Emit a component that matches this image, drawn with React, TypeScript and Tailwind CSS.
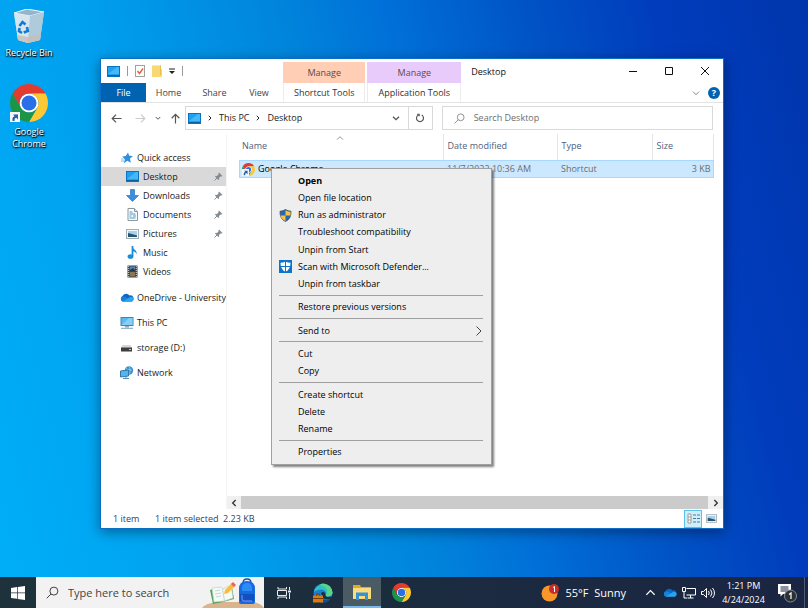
import type { ReactNode } from 'react';

type IconProps = { className?: string };

function ChromeIcon({ className }: IconProps) {
  return (
    <svg viewBox="0 0 48 48" className={className} aria-hidden="true">
      <circle cx="24" cy="24" r="12" fill="#fff" />
      <path fill="#e33b2e" d="M24,12H44.78a24,24,0,0,0-41.56,0L13.61,30A12,12,0,0,1,24,12Z" />
      <path fill="#fcc934" d="M34.39,30,24,48A24,24,0,0,0,44.78,12H24A12,12,0,0,1,34.39,30Z" />
      <path fill="#1e9447" d="M13.61,30,3.22,12A24,24,0,0,0,24,48L34.39,30a12,12,0,0,1-20.78,0Z" />
      <circle cx="24" cy="24" r="9.5" fill="#2b6fe8" />
    </svg>
  );
}

function ShortcutArrow({ className }: IconProps) {
  return (
    <svg viewBox="0 0 10 10" className={className} aria-hidden="true">
      <rect width="10" height="10" fill="#f4f6f8" />
      <path d="M2.5 9V6.5q0-2 2.2-2.2L3 2.5h5v5L6.3 5.8Q4.5 5.8 4.5 9z" fill="#2a5fa8" />
    </svg>
  );
}

function RecycleBinIcon({ className }: IconProps) {
  return (
    <svg viewBox="0 0 30 34" className={className} aria-hidden="true">
      <path d="M0 4 13 0l17 3-4 28-12 3-10-3z" fill="#c3dcea" />
      <path d="M0 4 16 7l14-4L13 0z" fill="#93b6cc" stroke="#edf6fb" strokeWidth="1" />
      <path d="M0 4l16 3-2 27-10-3z" fill="#d6e6ef" />
      <path d="M16 7l14-4-4 28-12 3z" fill="#aecadb" />
      <path d="M4 26l10 2 13-3-1 6-12 3-10-3z" fill="#c9bdb4" opacity=".8" />
      <g fill="none" stroke="#1878d0" strokeWidth="2.6">
        <path d="M5.5 17 8.500 13l3 2.500" />
        <path d="M13 18l.8 4-4 1.500" />
        <path d="M8 24l-3-1.800.6-3.200" />
      </g>
    </svg>
  );
}

function DesktopIcon({ className }: IconProps) {
  return (
    <svg viewBox="0 0 13 11" className={className} aria-hidden="true">
      <rect x=".5" y=".5" width="12" height="10" fill="#1ea1f1" stroke="#0b73bd" />
      <path d="M1 8 10 1h2v7z" fill="#45b8fa" />
      <path d="M1 9.5h11" stroke="#0f5f9e" />
    </svg>
  );
}

function StarIcon() {
  return (
    <svg viewBox="0 0 12 12" className="size-3" aria-hidden="true">
      <path d="M7 .5l1.200 3.300 3.800.2-3 2.600.8 4.200-3.500-2L3 11.200l.8-4L1.200 4.600l3.600-.5z" fill="#2f8fdc" />
      <path d="M0 7h2.500M0 9h3" stroke="#7fbbe9" />
    </svg>
  );
}

function DownloadIcon() {
  return (
    <svg viewBox="0 0 13 13" className="size-[13px]" aria-hidden="true">
      <path d="M4.500.5h4v6h4l-6 6-6-6h4z" fill="#3a8ede" stroke="#2877c5" strokeWidth=".7" />
    </svg>
  );
}

function DocumentIcon() {
  return (
    <svg viewBox="0 0 13 13" className="size-[13px]" aria-hidden="true">
      <path d="M2 .5h6.500l3 3v9H2z" fill="#fafcfd" stroke="#8b979f" />
      <path d="M8.500.5v3h3" fill="#d9e0e4" stroke="#8b979f" />
      <path d="M3.500 4h3M3.500 6h6M3.500 8h2M7 8h3M3.500 10h6" stroke="#4498c9" />
    </svg>
  );
}

function PictureIcon({ className = 'h-[10px] w-[13px]' }: IconProps) {
  return (
    <svg viewBox="0 0 13 10" className={className} aria-hidden="true">
      <rect x=".5" y=".5" width="12" height="9" fill="#f6f8f9" stroke="#a3adb4" />
      <rect x="2" y="2" width="9" height="6" fill="#a7d2ee" />
      <path d="M2 4l4 1 5 1.500V8H2z" fill="#27566d" />
    </svg>
  );
}

function MusicIcon() {
  return (
    <svg viewBox="0 0 13 13" className="size-[13px]" aria-hidden="true">
      <path d="M6.500 0v10" stroke="#168fdd" strokeWidth="1.800" />
      <path d="M6 0c.5 3.500 5.500 3.500 4.500 8.500C10 6 8.500 5.500 6 5z" fill="#168fdd" />
      <ellipse cx="4.500" cy="10.500" rx="2.900" ry="2.300" fill="#168fdd" />
    </svg>
  );
}

function VideoIcon() {
  return (
    <svg viewBox="0 0 13 13" className="size-[13px]" aria-hidden="true">
      <rect x="1.500" y=".5" width="10" height="12" fill="#3e4347" />
      <path d="M2.700 1v11M10.300 1v11" stroke="#d7dadc" strokeDasharray="1 1" />
      <rect x="4" y="1.500" width="5" height="4.500" fill="#5186bd" />
      <rect x="4" y="7" width="5" height="4.500" fill="#8b7650" />
      <path d="M4 5l3-2 2 2v1H4z" fill="#26374a" />
    </svg>
  );
}

function CloudIcon({ className }: IconProps) {
  return (
    <svg viewBox="0 0 14 9" className={className} aria-hidden="true">
      <path d="M3 8.500a3 3 0 0 1-.5-5.500A4 4 0 0 1 9.500 2.500a3 3 0 0 1 1.800 6z" fill="#0b68c2" />
      <path d="M2.500 8.500A2.500 2.500 0 0 1 2 4c2-.8 3.500-.2 4.500.6L11 7.500z" fill="#1583dc" />
      <path d="M2.500 8.800 9 4.800a2.500 2.500 0 0 1 4.500 2A2 2 0 0 1 11.800 8.800z" fill="#28a5ee" />
    </svg>
  );
}

function PcIcon() {
  return (
    <svg viewBox="0 0 14 12" className="h-3 w-[14px]" aria-hidden="true">
      <rect x="1" y=".5" width="12" height="8" fill="#5ab9f2" stroke="#4783ad" />
      <path d="M1.500 8 9 1h3.500v7z" fill="#86cff8" />
      <path d="M5 9h4v1.500H5z" fill="#8eaabb" />
      <path d="M1 11.300h12" stroke="#7ba3bd" />
    </svg>
  );
}

function DriveIcon() {
  return (
    <svg viewBox="0 0 13 8" className="h-2 w-[13px]" aria-hidden="true">
      <path d="M2.500 1h8L12 4H1z" fill="#d6d6d6" />
      <rect x="1" y="3.500" width="11" height="4" fill="#3b3f42" />
      <rect x="9" y="5" width="2" height="1" fill="#a8d6ae" />
    </svg>
  );
}

function NetworkIcon() {
  return (
    <svg viewBox="0 0 14 13" className="h-[13px] w-[14px]" aria-hidden="true">
      <circle cx="9" cy="4.500" r="4.200" fill="#3a8fcf" />
      <path d="M6 2.500c2 2 4 0 6 2M9 .5c2 3 1 6 0 8" stroke="#8fc9ef" fill="none" />
      <path d="M.5 5 8.500 4v6l-8 1z" fill="#56b5ec" stroke="#3277a8" />
      <path d="M3 12.500h6M6 10.500v2" stroke="#5a8fb4" />
    </svg>
  );
}

function PinIcon() {
  return (
    <svg viewBox="0 0 9 9" className="size-[9px]" aria-hidden="true">
      <path d="M5 .5 8.500 4 7.300 4.600 6.500 4.500 5 6l.2 1.400-.8.600L1 4.600l.7-.8L3 4l1.500-1.500L4.400 1.500z" fill="#838b92" />
      <path d="M3 6 .5 8.500" stroke="#838b92" />
    </svg>
  );
}

function ShieldIcon() {
  return (
    <svg viewBox="0 0 13 13" className="size-[13px]" aria-hidden="true">
      <path d="M6.500.5Q9 2.200 12 2.200 12.300 10 6.500 12.500.7 10 1 2.200 4 2.200 6.500.5z" fill="#2668b0" stroke="#44505c" strokeWidth=".8" />
      <path d="M6.500 1.200Q9 2.800 11.500 2.800V6.500H6.500z" fill="#f6c343" />
      <path d="M6.500 6.500V12Q2.300 10 1.500 6.500z" fill="#f6c343" />
    </svg>
  );
}

function DefenderIcon() {
  return (
    <svg viewBox="0 0 13 13" className="size-[13px]" aria-hidden="true">
      <rect width="13" height="13" fill="#0b74d1" />
      <path d="M6.500 1.500Q9 2.700 11.500 2.700 11.500 9.500 6.500 11.800 1.500 9.500 1.500 2.700 4 2.700 6.500 1.500z" fill="#fff" />
      <path d="M6.500 1v11M1 6.500h11" stroke="#0b74d1" />
    </svg>
  );
}

function SearchIcon({ className }: IconProps) {
  return (
    <svg viewBox="0 0 14 14" className={className} fill="none" stroke="currentColor" aria-hidden="true">
      <circle cx="8.500" cy="5.500" r="4.300" />
      <path d="M5.400 8.600.8 13.200" />
    </svg>
  );
}

function Stroke({ d, className, width = 1 }: { d: string; className: string; width?: number }) {
  return (
    <svg viewBox="0 0 12 12" className={className} fill="none" stroke="currentColor" strokeWidth={width} aria-hidden="true">
      <path d={d} />
    </svg>
  );
}

const ARROW_LEFT = 'M11.500 6H1.500M5.500 1.800 1.300 6l4.200 4.200';
const ARROW_RIGHT = 'M.5 6h10M6.500 1.800 10.700 6l-4.200 4.200';
const ARROW_UP = 'M6 11.500V1.500M1.800 5.700 6 1.500l4.200 4.200';
const CHEVRON_DOWN = 'M1.500 4 6 8.500 10.500 4';
const CHEVRON_UP = 'M1.500 8.500 6 4l4.500 4.500';
const CHEVRON_LEFT = 'M8.500 1.500 4 6l4.500 4.500';
const CHEVRON_RIGHT = 'M3.500 1.500 8 6l-4.500 4.500';

const quickAccess: { label: string; icon: ReactNode; pinned?: boolean; active?: boolean }[] = [
  { label: 'Desktop', icon: <DesktopIcon className="h-[11px] w-[13px]" />, pinned: true, active: true },
  { label: 'Downloads', icon: <DownloadIcon />, pinned: true },
  { label: 'Documents', icon: <DocumentIcon />, pinned: true },
  { label: 'Pictures', icon: <PictureIcon />, pinned: true },
  { label: 'Music', icon: <MusicIcon /> },
  { label: 'Videos', icon: <VideoIcon /> },
];

const places = [
  { label: 'OneDrive - University', icon: <CloudIcon className="h-[9px] w-[14px]" /> },
  { label: 'This PC', icon: <PcIcon /> },
  { label: 'storage (D:)', icon: <DriveIcon /> },
  { label: 'Network', icon: <NetworkIcon /> },
];

const menuGroups: { label: string; icon?: ReactNode; bold?: boolean; submenu?: boolean }[][] = [
  [
    { label: 'Open', bold: true },
    { label: 'Open file location' },
    { label: 'Run as administrator', icon: <ShieldIcon /> },
    { label: 'Troubleshoot compatibility' },
    { label: 'Unpin from Start' },
    { label: 'Scan with Microsoft Defender...', icon: <DefenderIcon /> },
    { label: 'Unpin from taskbar' },
  ],
  [{ label: 'Restore previous versions' }],
  [{ label: 'Send to', submenu: true }],
  [{ label: 'Cut' }, { label: 'Copy' }],
  [{ label: 'Create shortcut' }, { label: 'Delete' }, { label: 'Rename' }],
  [{ label: 'Properties' }],
];

function ContextMenu() {
  return (
    <div
      role="menu"
      className="absolute left-11 top-[34px] flex h-[297px] w-[221px] flex-col border border-[#a0a0a0] bg-[#eeeeee] py-[3px] shadow-[2px_2px_2px_rgba(0,0,0,0.5)]"
    >
      {menuGroups.map((group, i) => (
        <div key={group[0].label} className="contents">
          {i > 0 && <hr className="mt-[2px] mb-[3px] mr-2 ml-[7px] h-px border-0 bg-[#a0a0a0]" />}
          {group.map(item => (
            <button key={item.label} role="menuitem" className="flex min-h-0 flex-1 items-center pr-[6px] pl-[7px] text-left text-black">
              <span className="flex w-[19px] items-center">{item.icon}</span>
              <span className={item.bold ? 'flex-1 font-bold' : 'flex-1'}>{item.label}</span>
              {item.submenu && <Stroke d={CHEVRON_RIGHT} className="size-3 text-[#444]" />}
            </button>
          ))}
        </div>
      ))}
    </div>
  );
}

function ToolTab({ title, label, className }: { title: string; label: string; className: string }) {
  return (
    <div className="mt-[3px] flex flex-col text-center">
      <div className={`flex h-[21px] items-center justify-center text-[#5c4a4a] ${className}`}>{title}</div>
      <button className="flex h-[19px] items-center border-x border-[#ececec] px-[10px] whitespace-nowrap text-[#333]">{label}</button>
    </div>
  );
}

function TitleBar() {
  return (
    <header className="flex h-11 border-b border-[#e3e3e3]">
      <div className="flex w-[182px] flex-col">
        <div className="flex h-6 items-center gap-[7px] pl-[6px]">
          <DesktopIcon className="h-[11px] w-[13px]" />
          <span className="h-[10px] w-px bg-[#999]" />
          <svg viewBox="0 0 10 12" className="h-3 w-[10px]" aria-hidden="true">
            <rect x=".5" y=".5" width="9" height="11" fill="#fff" stroke="#a0a0a0" />
            <path d="M2.500 6l2 2.500 3.500-5" stroke="#e0643c" strokeWidth="1.400" fill="none" />
          </svg>
          <svg viewBox="0 0 10 12" className="h-3 w-[10px]" aria-hidden="true">
            <path d="M0 .5h8.500V4H10v8H0z" fill="#f8d775" />
            <path d="M8.500.5V10" stroke="#e8bf4b" />
          </svg>
          <svg viewBox="0 0 6 7" className="h-[7px] w-[6px]" aria-hidden="true">
            <path d="M0 1h6" stroke="#222" />
            <path d="M0 3h6L3 6z" fill="#222" />
          </svg>
          <span className="h-[10px] w-px bg-[#999]" />
        </div>
        <nav className="flex h-[19px] text-[#444]">
          <button className="w-[45px] bg-[#0063b1] text-white">File</button>
          <button className="w-[45px]">Home</button>
          <button className="w-[47px]">Share</button>
          <button className="w-[42px]">View</button>
        </nav>
      </div>
      <div className="flex gap-[2px]">
        <ToolTab title="Manage" label="Shortcut Tools" className="bg-[#ffceb5]" />
        <ToolTab title="Manage" label="Application Tools" className="bg-[#e9cbfb]" />
      </div>
      <h1 className="flex h-[25px] flex-1 items-center pl-[10px] text-[#111]">Desktop</h1>
      <div className="flex flex-col items-end">
        <div className="flex h-6 items-center text-[#111]">
          <button aria-label="Minimize" className="flex w-9 justify-center"><Stroke d="M2 6.500h8" className="size-3" /></button>
          <button aria-label="Maximize" className="flex w-9 justify-center"><Stroke d="M2.500 2.500h7v7h-7z" className="size-3" /></button>
          <button aria-label="Close" className="flex w-9 justify-center"><Stroke d="M2 2l8 8M10 2l-8 8" className="size-3" /></button>
        </div>
        <div className="flex h-[19px] items-center gap-2 pr-[3px]">
          <button aria-label="Expand ribbon"><Stroke d={CHEVRON_DOWN} className="size-2 text-[#888]" width={1.5} /></button>
          <button aria-label="Help" className="flex size-3 items-center justify-center rounded-full bg-[#0063b1] font-bold text-white">?</button>
        </div>
      </div>
    </header>
  );
}

function AddressBar() {
  return (
    <div className="flex h-[31px] items-center pr-[10px] pb-px pl-[10px] text-[#222]">
      <div className="flex w-[74px] items-center text-[#555]">
        <button aria-label="Back" className="w-6"><Stroke d={ARROW_LEFT} className="size-[11px]" width={1.3} /></button>
        <button aria-label="Forward" className="w-5 text-[#ccc]"><Stroke d={ARROW_RIGHT} className="size-[11px]" width={1.3} /></button>
        <button aria-label="Recent locations" className="w-[15px]"><Stroke d={CHEVRON_DOWN} className="size-[6px]" width={2} /></button>
        <button aria-label="Up"><Stroke d={ARROW_UP} className="size-[11px]" width={1.3} /></button>
      </div>
      <div className="flex h-6 flex-[253] border border-[#d9d9d9]">
        <div className="flex flex-1 items-center gap-[6px] pl-[2px]">
          <DesktopIcon className="h-[11px] w-[13px]" />
          <Stroke d={CHEVRON_RIGHT} className="size-[6px]" width={2} />
          <button>This PC</button>
          <Stroke d={CHEVRON_RIGHT} className="size-[6px]" width={2} />
          <button>Desktop</button>
        </div>
        <button aria-label="Previous locations" className="flex w-6 items-center justify-center text-[#555]">
          <Stroke d={CHEVRON_DOWN} className="size-2" width={2} />
        </button>
        <button aria-label="Refresh" className="flex w-6 items-center justify-center border-l border-[#d9d9d9] text-[#555]">
          <Stroke d="M4 2.500a4.200 4.200 0 1 0 4 0M2.500 1.500h2.500v2.500" className="size-[10px]" width={1.4} />
        </button>
      </div>
      <label className="ml-[9px] flex h-6 min-w-0 flex-[266] items-center gap-[9px] border border-[#d9d9d9] pl-[11px] text-[#777]">
        <SearchIcon className="size-[11px]" />
        <input
          aria-label="Search Desktop"
          placeholder="Search Desktop"
          className="min-w-0 flex-1 bg-transparent outline-none placeholder:text-[#6d6d6d]"
        />
      </label>
    </div>
  );
}

function Sidebar() {
  return (
    <aside className="w-[125px] shrink-0 overflow-hidden pt-[14px] whitespace-nowrap text-[#1a1a1a]">
      <button className="flex h-[19px] w-full items-center gap-1 pl-5">
        <StarIcon />
        Quick access
      </button>
      {quickAccess.map(item => (
        <button
          key={item.label}
          className={`flex h-[19px] w-full items-center pr-[3px] pl-[25px] ${item.active ? 'bg-[#d9d9d9]' : ''}`}
        >
          <span className="flex w-[17px]">{item.icon}</span>
          <span className="flex-1 text-left">{item.label}</span>
          {item.pinned && <PinIcon />}
        </button>
      ))}
      <div className="mt-1">
        {places.map(item => (
          <button key={item.label} className="flex h-[25px] w-full items-center pl-[19px]">
            <span className="flex w-[17px] shrink-0">{item.icon}</span>
            {item.label}
          </button>
        ))}
      </div>
    </aside>
  );
}

function FileList() {
  return (
    <div className="relative flex min-w-0 flex-1 flex-col border-l border-[#f5f5f5]">
      <div className="flex-1 pr-[9px] pl-3">
        <table className="w-full table-fixed border-collapse text-left text-[#6d6d6d]">
          <colgroup>
            <col className="w-[204px]" />
            <col className="w-[114px]" />
            <col className="w-[95px]" />
            <col />
          </colgroup>
          <thead>
            <tr className="h-[26px] text-[#50607a]">
              <th scope="col" className="relative border-r border-[#e5e5e5] pb-[3px] pl-[3px] font-normal">
                Name
                <Stroke d={CHEVRON_UP} className="absolute top-0 left-[97px] size-2" />
              </th>
              <th scope="col" className="border-r border-[#e5e5e5] pb-[3px] pl-1 font-normal">Date modified</th>
              <th scope="col" className="border-r border-[#e5e5e5] pb-[3px] pl-1 font-normal">Type</th>
              <th scope="col" className="border-r border-[#e5e5e5] pb-[3px] pl-1 font-normal">Size</th>
            </tr>
          </thead>
          <tbody>
            <tr className="h-[18px] bg-[#cce8ff] outline outline-[#a8d8ff] -outline-offset-1">
              <td className="pl-[3px] text-black">
                <span className="flex items-center gap-[3px]">
                  <span className="relative">
                    <ChromeIcon className="size-[13px]" />
                    <ShortcutArrow className="absolute bottom-0 left-0 size-[7px]" />
                  </span>
                  Google Chrome
                </span>
              </td>
              <td className="pl-1">11/7/2022 10:36 AM</td>
              <td className="pl-1">Shortcut</td>
              <td className="pr-[3px] text-right">3 KB</td>
            </tr>
          </tbody>
        </table>
      </div>
      <div className="flex h-[13px] bg-[#f0f0f0] text-[#333]">
        <button aria-label="Scroll left" className="flex w-[14px] items-center justify-center"><Stroke d={CHEVRON_LEFT} className="size-2" width={2} /></button>
        <div className="flex-1 bg-[#cbcbcb]" />
        <button aria-label="Scroll right" className="flex w-[15px] items-center justify-center"><Stroke d={CHEVRON_RIGHT} className="size-2" width={2} /></button>
      </div>
      <ContextMenu />
    </div>
  );
}

function ExplorerWindow() {
  return (
    <main className="absolute inset-x-0 top-[58px] bottom-12 mr-[84px] ml-[100px] flex flex-col border border-[#0b6fc8] bg-white shadow-[0_3px_12px_rgba(0,0,0,0.4)]">
      <TitleBar />
      <AddressBar />
      <div className="flex min-h-0 flex-1">
        <Sidebar />
        <FileList />
      </div>
      <footer className="flex h-[19px] items-center pl-3 text-[#2b3f66]">
        <span className="w-[42px]">1 item</span>
        <span className="flex-1">1 item selected&nbsp; 2.23 KB</span>
        <button aria-label="Details view" className="flex h-[18px] w-[18px] items-center justify-center border border-[#5cc0ea] bg-[#cdeefb]">
          <svg viewBox="0 0 13 11" className="h-[11px] w-[13px]" aria-hidden="true">
            <path d="M1 1h3v9H1zM1 4h3M1 7h3" fill="#fff" stroke="#888" strokeWidth=".8" />
            <path d="M6 2h3M10 2h3M6 5.500h3M10 5.500h3M6 9h3M10 9h3" stroke="#56798f" />
          </svg>
        </button>
        <button aria-label="Large icons view" className="mr-[2px] flex w-[19px] justify-center"><PictureIcon className="h-[9px] w-[11px]" /></button>
      </footer>
    </main>
  );
}

function DesktopShortcut({ label, children }: { label: string; children: ReactNode }) {
  return (
    <button className="flex w-[58px] flex-col items-center gap-1 leading-3 text-white [text-shadow:0_1px_2px_#000,1px_1px_1px_#000]">
      {children}
      {label}
    </button>
  );
}

function Taskbar() {
  return (
    <footer className="flex h-[31px] items-stretch bg-linear-to-r from-[#1e323b] to-[#1a2543] text-[11px] text-white">
      <button aria-label="Start" className="flex w-9 items-center justify-center">
        <svg viewBox="0 0 14 14" className="size-[14px]" fill="#fff" aria-hidden="true">
          <path d="M0 2l6-.9v5.400H0zM6.700 1 14 0v6.500H6.700zM0 7.300h6v5.500L0 12zM6.700 7.300H14V14l-7.300-1z" />
        </svg>
      </button>
      <label className="flex w-[228px] items-center gap-[9px] bg-[#f2f2f2] pl-[10px] text-[#333]">
        <SearchIcon className="size-[13px] shrink-0" />
        <input
          aria-label="Type here to search"
          placeholder="Type here to search"
          className="min-w-0 flex-1 bg-transparent outline-none placeholder:text-[#444]"
        />
        <svg viewBox="0 0 62 31" className="h-[31px] w-[62px] shrink-0" aria-hidden="true">
          <path d="M0 31Q2 27 14 25H52Q60 27 62 31z" fill="#d9b48c" />
          <path d="M8 13l10-3 3 2 9-2 2 12-11 3-10 2z" fill="#51a35f" />
          <path d="M10 11l9-1 2 2 8-4 2 13-9 3-10 1z" fill="#f4faf4" stroke="#bfd6c8" strokeWidth=".7" />
          <path d="M20.500 12l2 12M13 14l5-1M13 17l6-1M14 20l5-1" stroke="#b9c9d4" strokeWidth=".8" />
          <path d="M22 17l1-4 7-7 3 3-7 7z" fill="#ffba38" />
          <path d="M29 7l2-2 3 3-2 2z" fill="#e5626d" />
          <path d="M41 6q0-4 4-4t4 4" fill="none" stroke="#1450ac" strokeWidth="1.300" />
          <path d="M37 12q0-8 8-8t8 8v13q0 2-2 2H39q-2 0-2-2z" fill="#1769e0" />
          <path d="M40 11q0-5 5-5t5 5v3H40z" fill="#2d8bf7" />
          <path d="M38 17h14v7H38z" fill="#0d52bd" />
          <path d="M40 18v4q0 2 2 2h8" fill="none" stroke="#9a8bff" />
        </svg>
      </label>
      <button aria-label="Task view" className="flex w-[39px] items-center justify-center">
        <svg viewBox="0 0 14 12" className="h-3 w-[14px]" fill="none" stroke="#e8ecee" aria-hidden="true">
          <path d="M1 0v2h8.500V0M.5 3.500h9v5h-9zM1 12v-2h8.500v2M12.500 0v3M12.500 6v6" />
          <path d="M11 4.500h3" strokeWidth="2" />
        </svg>
      </button>
      <button aria-label="Microsoft Edge" className="flex w-10 items-center justify-center">
        <svg viewBox="0 0 20 20" className="size-5" aria-hidden="true">
          <circle cx="10" cy="10" r="9.500" fill="#1b7ed0" />
          <path d="M.8 9A9.500 9.500 0 0 1 19.500 9.500c0 4-5 5-7 3 2-3-1-6-4.500-6C4.500 6.500 2 8 .8 9z" fill="#2fc2c5" />
          <path d="M10 .5a9.500 9.500 0 0 1 9.500 9c0 4-5 5-7 3 4-4 1-9-6-11z" fill="#5bd584" />
          <path d="M7 11c0 5 5 7 10 5-2 3-7 4.500-11 2.500z" fill="#114d93" />
          <path d="M8 10q2-2 4 0 0 3 2 4l5-.5-1 2.500q-5 1-8-1z" fill="#1e3038" />
          <rect y="12.500" width="10" height="7" fill="#d87a16" />
          <path d="M0 15.500h10M3.500 12.500V11h3v1.500" stroke="#7f3c00" fill="none" />
        </svg>
      </button>
      <button aria-label="File Explorer" className="flex w-[38px] items-center justify-center border-b-2 border-[#76b9ed] bg-[#4a5b64]">
        <svg viewBox="0 0 18 16" className="h-4 w-[18px]" aria-hidden="true">
          <path d="M0 1h7l1 2h10v12H0z" fill="#e2a72e" />
          <path d="M0 4h18v11H0z" fill="#fbdc7c" />
          <path d="M3 16V8.500h12V16h-3v-4H6v4z" fill="#3692d6" />
        </svg>
      </button>
      <button aria-label="Google Chrome" className="flex w-10 items-center justify-center"><ChromeIcon className="size-[19px]" /></button>
      <div className="ml-auto flex items-center">
        <button className="flex items-center gap-[7px] whitespace-nowrap">
          <svg viewBox="0 0 18 18" className="size-[18px]" aria-hidden="true">
            <circle cx="8.500" cy="9.500" r="8" fill="#f7962a" />
            <circle cx="13" cy="5" r="5" fill="#c52d28" />
            <path d="M12 3.500l1.500-1V8" stroke="#fff" fill="none" />
          </svg>
          <span>55°F&nbsp; Sunny</span>
        </button>
        <button aria-label="Show hidden icons" className="ml-[19px]"><Stroke d={CHEVRON_UP} className="size-[11px]" width={1.3} /></button>
        <CloudIcon className="ml-[7px] h-[9px] w-[14px]" />
        <svg viewBox="0 0 14 12" className="ml-[5px] h-3 w-[14px]" fill="none" stroke="#fff" aria-label="Network">
          <path d="M4.500 1.500h9v6.500h-9M8.500 8v3M5.500 11h6M.5.5h3v4h-3zM2 4.500V11h3" />
        </svg>
        <svg viewBox="0 0 14 12" className="ml-[5px] h-3 w-[14px]" fill="none" stroke="#fff" aria-label="Volume">
          <path d="M.5 4.500H2.500l3-3v9l-3-3H.5zM7.500 4q1.500 2 0 4M9.500 2.500q3 3.500 0 7M11.500 1q4 5 0 10" />
        </svg>
        <button className="ml-[7px] w-[43px] text-center text-[9px] leading-[14px]">
          <span className="block">1:21 PM</span>
          <span className="block">4/24/2024</span>
        </button>
        <button aria-label="Notifications" className="ml-[13px]">
          <svg viewBox="0 0 20 20" className="size-5" aria-hidden="true">
            <path d="M0 1h13v10H5l-2.500 2.500V11H0z" fill="#fff" />
            <path d="M2.500 4h8M2.500 6h8M2.500 8h8" stroke="#1a2543" />
            <circle cx="12.500" cy="13" r="6" fill="#2b3034" stroke="#858b93" />
            <path d="M11 11.500l2-1.500v6" fill="none" stroke="#fff" strokeWidth="1.200" />
          </svg>
        </button>
        <span className="mr-[3px] ml-[6px] h-[31px] w-px bg-[#4e5a72]" />
      </div>
    </footer>
  );
}

export default function App() {
  return (
    <div className="flex min-h-screen flex-col bg-[#00adf7] font-['Open_Sans','Noto_Sans',sans-serif] text-[9px] leading-4">
      <div className="relative min-h-[500px] flex-1 bg-[linear-gradient(75deg,#00aef8_0%,#00a0ee_24%,#0086dc_44%,#0070d8_56%,#0054c6_70%,#003cbc_84%,#0036ac_100%)]">
        <div className="flex flex-col items-start gap-[25px] pt-[9px]">
          <DesktopShortcut label="Recycle Bin"><RecycleBinIcon className="h-[34px] w-[30px]" /></DesktopShortcut>
          <DesktopShortcut label="Google Chrome">
            <span className="relative">
              <ChromeIcon className="size-[38px]" />
              <ShortcutArrow className="absolute bottom-0 left-0 size-[10px]" />
            </span>
          </DesktopShortcut>
        </div>
        <ExplorerWindow />
      </div>
      <Taskbar />
    </div>
  );
}
